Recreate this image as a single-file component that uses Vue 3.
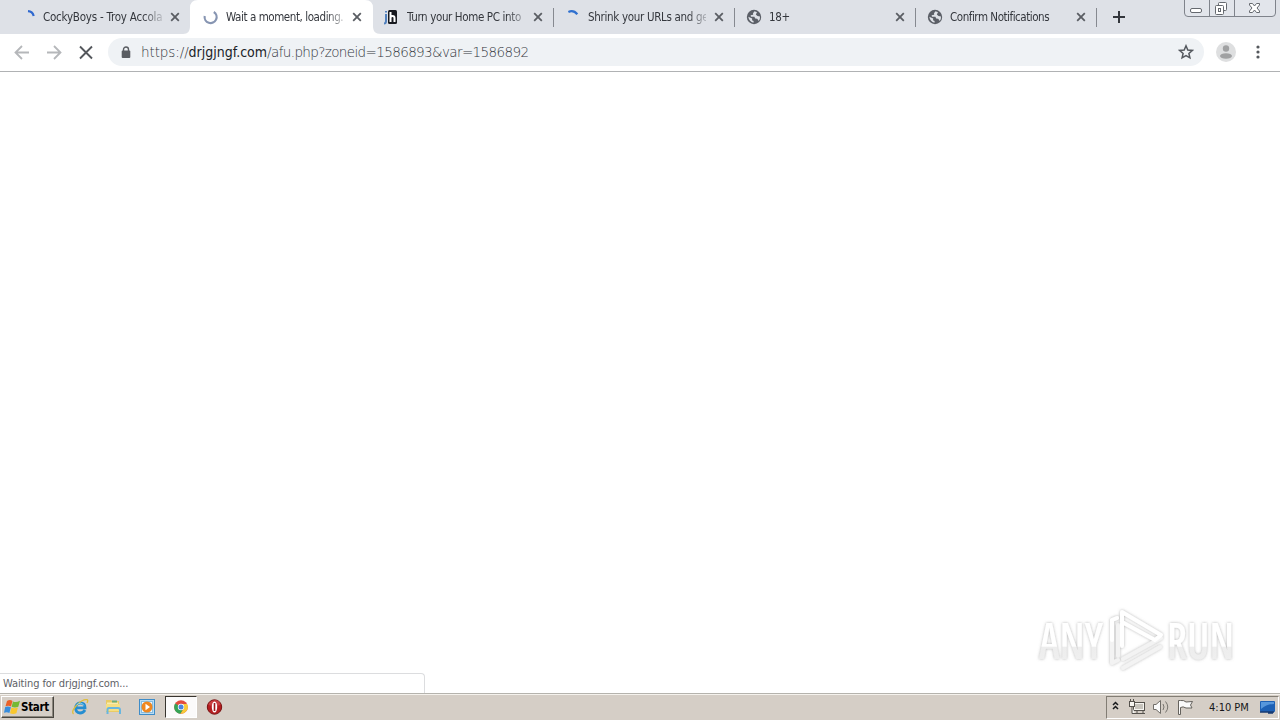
<template>
  <div class="screen">
    <header class="tab-strip">
      <div v-for="(tab, i) in tabs" :key="tab.title" class="tab" :class="{ active: tab.active, divided: i > 1 }">
        <svg v-if="tab.active" class="tab-shape" width="198" height="34" viewBox="0 0 198 34">
          <path d="M0 34 C5 34 7 31 7 26 V8 Q7 0 15 0 H182 Q190 0 190 8 V26 C190 31 192 34 198 34 Z" fill="#fff" />
        </svg>
        <svg class="favicon" width="16" height="16" viewBox="0 0 16 16">
          <path v-if="tab.icon === 'spin-a'" d="M7 2.2 Q11.5 2.5 12.7 7" fill="none" stroke="#2f68cf" stroke-width="2.2" />
          <path v-if="tab.icon === 'spin-b'" d="M3.4 2.9 Q8.5 .6 12.3 5.2" fill="none" stroke="#2f70cf" stroke-width="2.2" />
          <path v-if="tab.icon === 'wait'" d="M1.7 7 A6 6 0 1 0 10.8 3" fill="none" stroke="#8795b2" stroke-width="2.2" />
          <g v-if="tab.icon === 'jh'">
            <rect x="4" y="1" width="9" height="14" rx="1.500" fill="#17191f" />
            <path d="M2 5 V12 Q2 14.500 0 14.500 M2 2 V3.500" fill="none" stroke="#5180bd" stroke-width="2" />
            <path d="M6.500 3 V13 M6.500 8.500 Q7 7 8.500 7 Q10.500 7 10.500 9 V13" fill="none" stroke="#fff" stroke-width="2" />
          </g>
          <g v-if="tab.icon === 'globe'">
            <circle cx="8" cy="8" r="7.2" fill="#5b5f67" />
            <path d="M8.500 2.200 L7 4.200 7.200 5.800 4.600 6.200 5 7.800 H8.400 L9.200 9.600 11.200 9.800 12.800 12 Q14.200 10.200 14 7.500 L11.500 7 9.800 5.500 11 3.200 Z M2.300 7.800 L6.200 9.500 6 11.200 7.600 12 7.500 13.800 Q3.200 13 2.300 7.800Z" fill="#dee1e7" />
          </g>
        </svg>
        <span class="title" :style="{ letterSpacing: tab.spacing + 'px' }">{{ tab.title }}</span>
        <svg class="close" width="10" height="10" viewBox="0 0 10 10">
          <path d="M1.200 1.200 L8.800 8.800 M8.800 1.200 L1.200 8.800" stroke="#5a5d63" stroke-width="1.800" />
        </svg>
      </div>
      <svg class="new-tab" width="12" height="12" viewBox="0 0 12 12">
        <path d="M6 0 V12 M0 6 H12" stroke="#33363c" stroke-width="2" />
      </svg>
      <svg class="window-controls" width="96" height="18" viewBox="0 0 96 18">
        <path d="M1.500 0 V13 Q1.500 16.500 5 16.500 H89 Q92.500 16.500 92.500 13 V0 M26.500 0 V16 M51.500 0 V16" fill="#e2e5eb" stroke="#7f838b" />
        <g fill="#fff" stroke="#65696f">
          <rect x="7.500" y="8.500" width="11" height="4" rx="1.500" />
          <rect x="35.500" y="2.500" width="8" height="8" rx="1" />
          <rect x="32.500" y="5.500" width="8" height="9" rx="1" />
          <rect x="35.500" y="8.500" width="2" height="3" />
          <path d="M66.500 3.500 H69.500 L71.500 6 L73.500 3.500 H76.500 V5 L74 8 L76.500 11 V12.500 H73.500 L71.500 10 L69.500 12.500 H66.500 V11 L69 8 L66.500 5 Z" />
        </g>
      </svg>
    </header>

    <nav class="toolbar">
      <svg class="nav-icons" width="108" height="37" viewBox="0 0 108 37">
        <path d="M29 18.500 H16 M22 12 L15.500 18.500 L22 25" fill="none" stroke="#b5b7ba" stroke-width="1.800" />
        <path d="M47 18.500 H60 M54 12 L60.500 18.500 L54 25" fill="none" stroke="#b5b7ba" stroke-width="1.800" />
        <path d="M80 12.500 L92 24.500 M92 12.500 L80 24.500" stroke="#54575c" stroke-width="1.900" />
      </svg>
      <div class="omnibox">
        <svg class="lock" width="10" height="13" viewBox="0 0 10 13">
          <path d="M2.500 5 V3.500 A2.500 2.500 0 0 1 7.500 3.500 V5" fill="none" stroke="#5a5d62" stroke-width="1.400" />
          <rect x="0.700" y="4.500" width="8.600" height="7.500" rx="1" fill="#5a5d62" />
        </svg>
        <span class="url"><i class="scheme">https://</i><i class="host">drjgjngf.com</i><i class="path">/afu.php?zoneid=1586893&amp;var=1586892</i></span>
        <svg class="star" width="16" height="16" viewBox="0 0 16 16">
          <path d="M8 1.800 L9.800 6 L14.300 6.400 L10.900 9.400 L11.900 13.800 L8 11.500 L4.100 13.800 L5.100 9.400 L1.700 6.400 L6.200 6 Z" fill="none" stroke="#54585e" stroke-width="1.500" />
        </svg>
      </div>
      <svg class="avatar" width="20" height="20" viewBox="0 0 20 20">
        <circle cx="10" cy="10" r="10" fill="#dedfe0" />
        <circle cx="10" cy="6.500" r="3.200" fill="#a0a1a2" />
        <ellipse cx="10" cy="14" rx="6" ry="2.800" fill="#a0a1a2" />
      </svg>
      <svg class="more" width="4" height="14" viewBox="0 0 4 14">
        <g fill="#55585d"><circle cx="2" cy="2" r="1.600" /><circle cx="2" cy="7" r="1.600" /><circle cx="2" cy="12" r="1.600" /></g>
      </svg>
    </nav>

    <main class="page">
      <svg class="watermark" width="230" height="80" viewBox="0 0 230 80">
        <defs>
          <filter id="soft" x="-10%" y="-20%" width="120%" height="140%">
            <feDropShadow dx="0" dy="0" stdDeviation="1.800" flood-color="#777" flood-opacity=".55" />
          </filter>
          <linearGradient id="fade" x1="0" y1="0" x2="0" y2="1">
            <stop offset=".6" stop-color="#fff" />
            <stop offset=".61" stop-color="#ededed" />
            <stop offset="1" stop-color="#f1f1f1" />
          </linearGradient>
        </defs>
        <g filter="url(#soft)">
          <text x="19" y="58.500" textLength="64" lengthAdjust="spacingAndGlyphs" class="brand">ANY</text>
          <text x="147" y="58.500" textLength="67" lengthAdjust="spacingAndGlyphs" class="brand">RUN</text>
          <path d="M97 18 L92 20 V63 L98 60 M98 25 V56 M103 59 L141 38 M103 68 L140 47" fill="none" stroke="#f3f3f3" stroke-width="4" stroke-linejoin="round" stroke-linecap="round" />
          <path d="M92 40 V20 L97 18 M102 46 V12 L141 35 L135 40 L102 22" fill="none" stroke="#fff" stroke-width="4" stroke-linejoin="round" stroke-linecap="round" />
        </g>
      </svg>
      <div class="status">Waiting for drjgjngf.com...</div>
    </main>

    <footer class="taskbar">
      <div class="start">
        <svg width="17" height="16" viewBox="0 0 17 16">
          <path d="M3 2 Q6 .2 8.500 2 L7 7.500 Q4.500 6 1.500 7.300Z" fill="#ea6129" />
          <path d="M9 2.500 Q12 4 16 1.700 L14.300 7.800 Q11 9.300 7.600 7.800Z" fill="#75b934" />
          <path d="M1.200 8 Q4 6.800 6.900 8.300 L5.400 14 Q3 12.500 0 13.700Z" fill="#388ddd" />
          <path d="M7.500 8.500 Q10.500 10 13.900 8.500 L12.400 14.300 Q9 15.700 6 14.200Z" fill="#f9c72e" />
        </svg>
        <span>Start</span>
      </div>
      <div class="quick-launch">
        <div class="task">
          <svg width="18" height="18" viewBox="0 0 18 18">
            <path d="M14 12 Q12.300 15 9 15 C2.700 14.700 3.500 5 9.300 5 Q14 5 14 9.800 H5.500" fill="none" stroke="#258ed1" stroke-width="2.800" />
            <path d="M2.500 16 C-1 12.500 10 .8 16 1.600 Q17.500 2 16 5" fill="none" stroke="#dfbd39" stroke-width="1.300" />
            <path d="M6 7 Q7 5.300 9.300 5.300 Q12 5.300 12.800 7.500" fill="none" stroke="#85d1f2" stroke-width="1" />
          </svg>
        </div>
        <div class="task">
          <svg width="18" height="18" viewBox="0 0 18 18">
            <path d="M1 2 H6 L7 3 H14 V14 H1Z" fill="#e9cb65" />
            <path d="M2 4.500 H13 V9 H2Z" fill="#f8ecac" />
            <path d="M7 2.500 H12 V4.500 H7Z" fill="#6dad78" />
            <path d="M1 6 H15 V13 H1Z" fill="#f5df82" />
            <path d="M2.500 16 V11.500 Q2.500 10 4 10 H13 Q15 10 15 12 V16" fill="none" stroke="#68b6df" stroke-width="2" />
          </svg>
        </div>
        <div class="task">
          <svg width="18" height="18" viewBox="0 0 18 18">
            <rect x="1.500" y="1.500" width="15" height="15" fill="#b9dcf3" stroke="#3e8cc8" />
            <rect x="3.500" y="3.500" width="11" height="11" fill="#eef8fe" stroke="#85bce1" />
            <circle cx="9" cy="9" r="5.500" fill="#ef8720" />
            <path d="M7.500 5.800 L12 9 L7.500 12.200Z" fill="#fff" />
          </svg>
        </div>
        <div class="task pressed">
          <svg width="16" height="16" viewBox="0 0 16 16">
            <circle cx="8" cy="8" r="6.800" fill="#e34b3d" />
            <path d="M8 8 L2.100 4.600 A6.800 6.800 0 0 0 7.500 14.800 L11 9Z" fill="#35a456" />
            <path d="M8 5 H14.100 A6.800 6.800 0 0 1 7.500 14.800 L11 9Z" fill="#f8cb39" />
            <circle cx="8" cy="8" r="3.200" fill="#fff" />
            <circle cx="8" cy="8" r="2.500" fill="#4a83df" />
          </svg>
        </div>
        <div class="task">
          <svg width="18" height="18" viewBox="0 0 18 18">
            <circle cx="9.500" cy="9" r="7.200" fill="#b51e20" stroke="#771011" />
            <path d="M4 5 Q8.500 .5 13.500 3 Q15.500 5 15.500 7 Q9.500 9 3.500 7Z" fill="#de6060" opacity=".5" />
            <ellipse cx="9.500" cy="9" rx="2.700" ry="5.500" fill="#fff" />
            <path d="M9.500 5 V13" stroke="#9d1718" stroke-width="1.600" />
          </svg>
        </div>
      </div>
      <div class="tray">
        <svg width="90" height="20" viewBox="0 0 90 20">
          <path d="M6 8 L8.500 5.500 L11 8 M6 12 L8.500 9.500 L11 12" fill="none" stroke="#17191c" stroke-width="1.500" />
          <g fill="#f6f5f1" stroke="#55524d">
            <rect x="26.500" y="5.500" width="11" height="8" />
            <path d="M30 13.500 V16 M36 13.500 V16 M28 16.500 H38" />
            <rect x="22.500" y="4.500" width="5" height="5" />
            <path d="M23.500 2 V4 M26.500 2 V4 M25 9.500 V16.500 H28" />
          </g>
          <rect x="28" y="7" width="8" height="5" fill="#c7c4bd" />
          <path d="M46.500 7.500 H49 L53.500 3.500 V16.500 L49 12.500 H46.500Z" fill="#fafafa" stroke="#706d68" />
          <path d="M56 7 Q58 10 56 13 M58.500 4.500 Q63 10 58.500 15.500" fill="none" stroke="#77746e" />
          <path d="M71.500 17.500 V3.500 H73.500 Q77 3 79 5 L85.500 4.500 L83.500 8 L85 11 H79 Q76 9 73.500 10.500 V17.500Z" fill="#fafafa" stroke="#65625d" />
        </svg>
        <span class="clock">4:10 PM</span>
        <svg class="desktop" width="18" height="16" viewBox="0 0 18 16">
          <rect x="1" y="2" width="15" height="11" rx="1" fill="#1e61b5" />
          <path d="M2 3 H15 V5 Q8 5 2 10Z" fill="#5797dc" />
          <path d="M1 13 H15 M9 14 H14" stroke="#173a71" stroke-width="1.300" />
        </svg>
      </div>
    </footer>
  </div>
</template>

<script setup>
const tabs = [
  { title: 'CockyBoys - Troy Accola', icon: 'spin-a', spacing: -0.22 },
  { title: 'Wait a moment, loading.', icon: 'wait', spacing: -0.43, active: true },
  { title: 'Turn your Home PC into', icon: 'jh', spacing: -0.37 },
  { title: 'Shrink your URLs and ge', icon: 'spin-b', spacing: -0.31 },
  { title: '18+', icon: 'globe', spacing: -0.3 },
  { title: 'Confirm Notifications', icon: 'globe', spacing: -0.46 }
]
</script>

<style>
body {
  overflow: hidden;
}
</style>

<style scoped>
.screen {
  width: 1280px;
  height: 720px;
  display: flex;
  flex-direction: column;
  background: #fff;
  font-family: "DejaVu Sans Condensed", "DejaVu Sans", sans-serif;
  font-stretch: condensed;
}

.screen svg {
  display: block;
  flex-shrink: 0;
}

.tab-strip {
  position: relative;
  display: flex;
  height: 34px;
  padding-left: 9px;
  box-sizing: border-box;
  background: #dee1e7;
}

.tab {
  position: relative;
  display: flex;
  align-items: center;
  width: 181px;
  height: 34px;
  padding-left: 12px;
  box-sizing: border-box;
}

.tab.active {
  margin-left: 1px;
}

.tab.divided::after {
  content: "";
  position: absolute;
  right: -1px;
  top: 8px;
  width: 1px;
  height: 19px;
  background: #868990;
}

.tab-shape {
  position: absolute;
  left: -8px;
  top: 0;
}

.favicon {
  position: relative;
}

.title {
  position: relative;
  width: 119px;
  margin-left: 6px;
  white-space: nowrap;
  font-size: 11.5px;
  line-height: 18px;
  color: #34373d;
  -webkit-mask-image: linear-gradient(to right, #000 100px, transparent 124px);
  mask-image: linear-gradient(to right, #000 100px, transparent 124px);
}

.tab + .tab .title {
  width: 118px;
  margin-left: 7px;
}

.close {
  position: relative;
  margin-left: 8px;
}

.new-tab {
  margin: 11px 0 0 17px;
}

.window-controls {
  position: absolute;
  top: 0;
  right: 1px;
}

.toolbar {
  display: flex;
  align-items: center;
  height: 38px;
  padding-bottom: 1px;
  box-sizing: border-box;
  border-bottom: 1px solid #b0b2b4;
}

.omnibox {
  display: flex;
  align-items: center;
  width: 1096px;
  height: 28px;
  padding: 0 10px 0 13px;
  box-sizing: border-box;
  border-radius: 14px;
  background: #eff2f5;
}

.url {
  flex: 1;
  margin-left: 10px;
  display: flex;
  align-items: baseline;
  font-family: "DejaVu Sans", sans-serif;
  font-stretch: normal;
  font-weight: 200;
  font-size: 13.5px;
}

.url i {
  font-style: normal;
}

.scheme,
.path {
  color: #33373d;
}

.scheme {
  letter-spacing: -0.1px;
}

.path {
  letter-spacing: -0.62px;
}

.host {
  color: #202328;
  font-family: "DejaVu Sans Condensed", "DejaVu Sans", sans-serif;
  font-stretch: condensed;
  font-weight: 400;
  font-size: 14px;
}

.avatar {
  margin-left: 12px;
}

.more {
  margin-left: 20px;
}

.page {
  position: relative;
  flex: 1;
  background: #fff;
}

.watermark {
  position: absolute;
  left: 1020px;
  top: 528px;
}

.brand {
  font-family: "Open Sans", sans-serif;
  font-size: 50px;
  font-weight: 600;
  fill: url(#fade);
}

.status {
  position: absolute;
  left: 0;
  bottom: 0;
  width: 425px;
  height: 20px;
  padding-left: 3px;
  box-sizing: border-box;
  border: 1px solid #dcdddf;
  border-left: 0;
  border-bottom: 0;
  border-radius: 0 4px 0 0;
  font-size: 11px;
  line-height: 20px;
  letter-spacing: -0.1px;
  color: #5e6166;
}

.taskbar {
  display: flex;
  align-items: center;
  height: 27px;
  box-sizing: border-box;
  border-top: 1px solid #b5b3ad;
  background: #d5cec6;
  box-shadow: inset 0 1px #f5f2ed;
}

.start {
  display: flex;
  align-items: center;
  width: 53px;
  height: 22px;
  margin-left: 1px;
  padding-left: 2px;
  box-sizing: border-box;
  border: 1px solid;
  border-color: #fff #49463f #49463f #fff;
  box-shadow: inset -1px -1px #8c877e;
  font-size: 11.5px;
  letter-spacing: -0.3px;
  font-weight: bold;
  color: #000;
}

.quick-launch {
  display: flex;
  align-items: center;
  margin-left: 10px;
}

.task {
  display: flex;
  align-items: center;
  justify-content: center;
  width: 32px;
  height: 22px;
  margin-right: 1.5px;
}

.pressed {
  box-sizing: border-box;
  border: 1px solid;
  border-color: #38352f #fff #fff #38352f;
  background: #fbfafa;
}

.tray {
  display: flex;
  align-items: center;
  width: 173px;
  height: 23px;
  margin-left: auto;
  margin-right: 1px;
  box-sizing: border-box;
  border: 1px solid;
  border-color: #827d74 #fff #fff #827d74;
}

.clock {
  width: 50px;
  margin-left: 12px;
  font-size: 11px;
  white-space: nowrap;
  color: #15171a;
}

.desktop {
  margin-left: 0;
}
</style>
